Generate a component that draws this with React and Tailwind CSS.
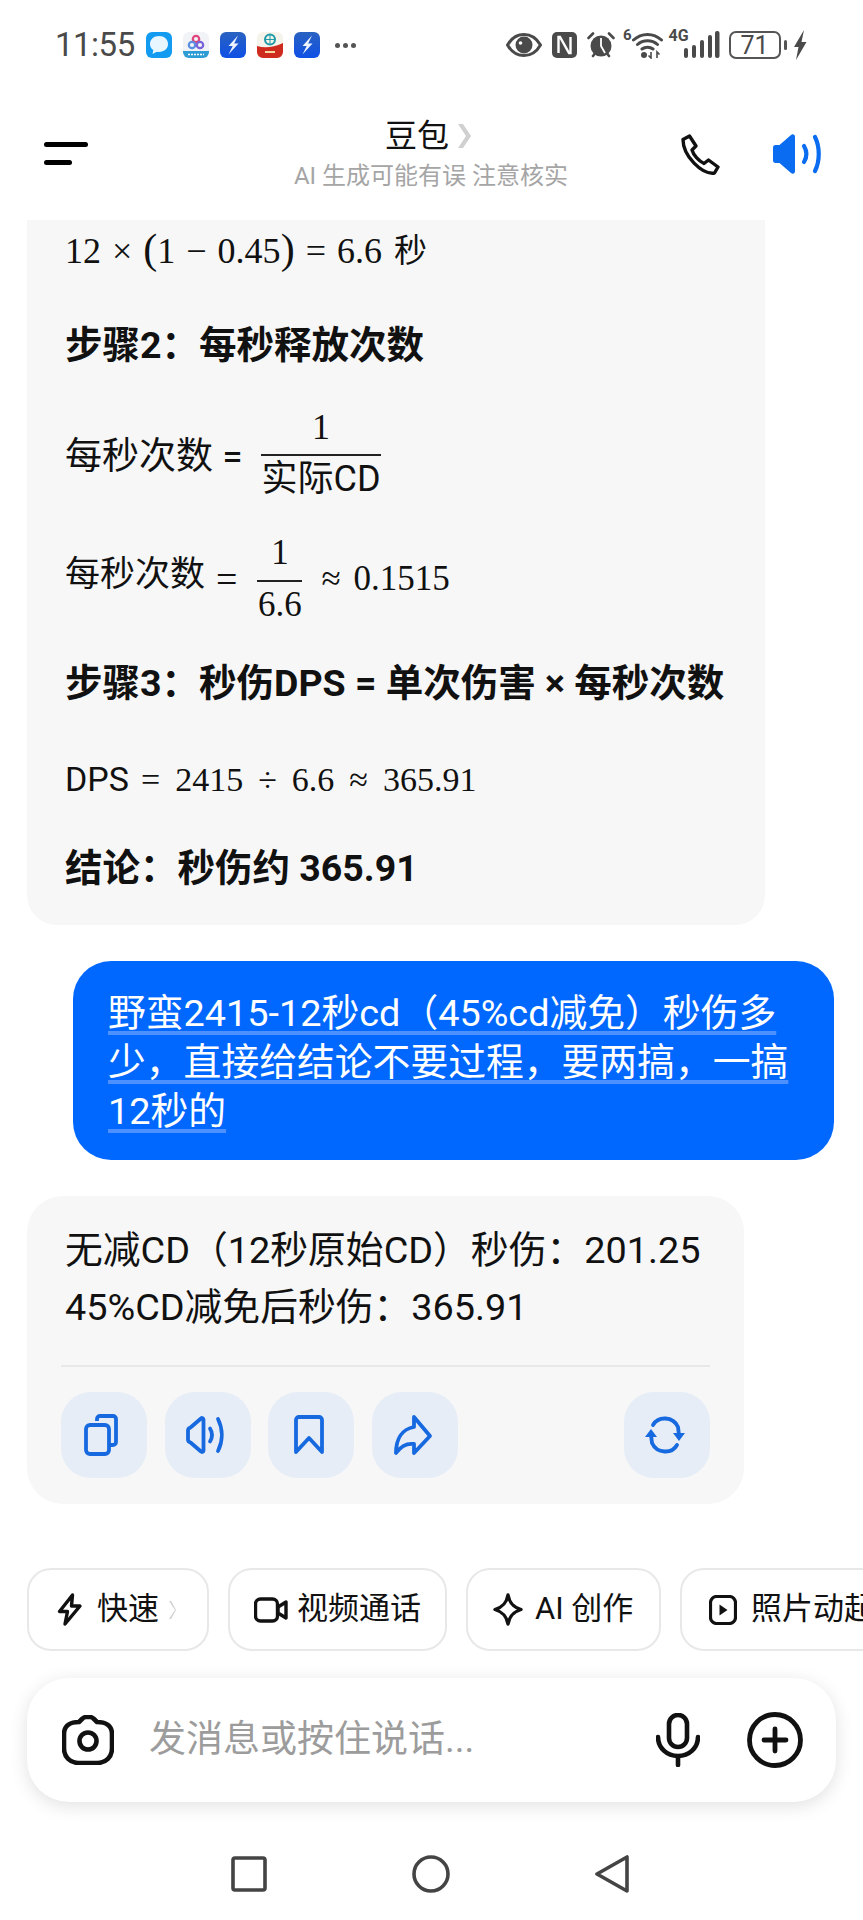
const BLUE = '#1769e0';

// full-width punctuation as it appears in the chat text
const COLON = '\uFF1A';
const LP = '\uFF08';
const RP = '\uFF09';
const COMMA = '\uFF0C';

const AppChat = () => (
  <svg width="26" height="26" viewBox="0 0 26 26">
    <rect width="26" height="26" rx="6" fill="#129bf0" />
    <path d="M13 4c-5.300 0-9 3.500-9 8 0 2.600 1.300 4.700 3.300 6.100L6.500 22l4.300-2.300c.7.200 1.400.2 2.200.2 5.300 0 9-3.400 9-7.900S18.300 4 13 4z" fill="#e8f6ff" />
  </svg>
);

const AppRings = () => (
  <svg width="26" height="26" viewBox="0 0 26 26">
    <rect width="26" height="26" rx="6" fill="#f1f3f6" />
    <circle cx="13" cy="7" r="3.200" fill="none" stroke="#e0457c" strokeWidth="2.200" />
    <circle cx="9" cy="13" r="3.200" fill="none" stroke="#5a8fe0" strokeWidth="2.200" />
    <circle cx="17" cy="13" r="3.200" fill="none" stroke="#7a62d8" strokeWidth="2.200" />
    <path d="M0 19h26v1a6 6 0 0 1-6 6H6a6 6 0 0 1-6-6z" fill="#2f9cd6" />
    <path d="M5 22.500h16" stroke="#fff" strokeWidth="1.400" strokeDasharray="2 1" />
  </svg>
);

const AppBolt = ({ id }) => (
  <svg width="26" height="26" viewBox="0 0 26 26">
    <defs>
      <linearGradient id={id} x1="0" y1="0" x2="0" y2="1">
        <stop offset="0" stopColor="#2a62c0" />
        <stop offset="1" stopColor="#0f50e6" />
      </linearGradient>
    </defs>
    <rect width="26" height="26" rx="6" fill={`url(#${id})`} />
    <path d="M18 3.500L8.500 14h4.200L8.500 22.500 18.500 11.500h-4.300z" fill="#eef4ff" />
  </svg>
);

const AppMobile = () => (
  <svg width="26" height="26" viewBox="0 0 26 26">
    <rect width="26" height="26" rx="6" fill="#f6f3ea" />
    <circle cx="13" cy="7.500" r="5" fill="none" stroke="#1f9aa8" strokeWidth="2" />
    <path d="M8 7.500h10M13 2.500v10" stroke="#1f9aa8" strokeWidth="1" />
    <path d="M0 14c8 2.500 16 1.500 26-3v9a6 6 0 0 1-6 6H6a6 6 0 0 1-6-6z" fill="#cf2a1e" />
    <path d="M8 20h10" stroke="#f7d8a0" strokeWidth="2" />
  </svg>
);

const Eye = () => (
  <svg width="36" height="26" viewBox="0 0 36 26">
    <path d="M1.500 13C5.500 6 11 2.500 18 2.500S30.500 6 34.500 13C30.500 20 25 23.500 18 23.500S5.500 20 1.500 13z" fill="none" stroke="#4a4a4a" strokeWidth="3" />
    <circle cx="18" cy="13" r="8.500" fill="#4a4a4a" />
    <circle cx="14.500" cy="11" r="1.800" fill="#fff" />
  </svg>
);

const Nfc = () => (
  <svg width="25" height="26" viewBox="0 0 25 26">
    <rect x="0" y="0" width="25" height="26" rx="5" fill="#4a4a4a" />
    <path d="M6.500 21V5h1.500l9 16h1.500V5" fill="none" stroke="#fff" strokeWidth="2.400" />
  </svg>
);

const Alarm = () => (
  <svg width="28" height="28" viewBox="0 0 28 28">
    <circle cx="14" cy="15" r="10.500" fill="#4a4a4a" />
    <path d="M14 7v8l4 7" fill="none" stroke="#fff" strokeWidth="1.800" />
    <path d="M1.500 7L6 2.500M26.500 7L22 2.500M6 25l2-2.500M22 25l-2-2.500" stroke="#4a4a4a" strokeWidth="2.600" strokeLinecap="round" />
  </svg>
);

const Wifi = () => (
  <svg width="31" height="28" viewBox="0 0 31 28">
    <path d="M1.500 9C9.500 1.500 21.500 1.500 29.500 9M5.500 13.500c5.500-5 14.500-5 20 0M10 18c3-2.500 8-2.500 11 0" fill="none" stroke="#4a4a4a" strokeWidth="3" strokeLinecap="round" />
    <circle cx="12" cy="24" r="3" fill="#4a4a4a" />
    <path d="M19 21v6l-2.500-2.500M25 27v-6l2.500 2.500" fill="none" stroke="#4a4a4a" strokeWidth="1.600" />
  </svg>
);

const Signal = () => (
  <svg width="37" height="28" viewBox="0 0 37 28">
    <rect x="1" y="17" width="4" height="10" rx="2" fill="#4a4a4a" />
    <rect x="9" y="14" width="4" height="13" rx="2" fill="#4a4a4a" />
    <rect x="17" y="9" width="4" height="18" rx="2" fill="#4a4a4a" />
    <rect x="25" y="4" width="4" height="23" rx="2" fill="#4a4a4a" />
    <rect x="32" y="0" width="4.500" height="27" rx="2" fill="#4a4a4a" />
  </svg>
);

const ChipBolt = () => (
  <svg width="26" height="33" viewBox="0 0 26 33" fill="none" stroke="#111" strokeWidth="3.400" strokeLinejoin="round">
    <path d="M15.500 2L2.500 18.500h8L8 31l15-18h-8.500z" />
  </svg>
);

const ChipVideo = () => (
  <svg width="34" height="26" viewBox="0 0 34 26" fill="none" stroke="#111" strokeWidth="3.400" strokeLinejoin="round">
    <rect x="1.500" y="2" width="22" height="22" rx="5" />
    <path d="M24 10l8-5v16l-8-5z" />
  </svg>
);

const ChipSpark = () => (
  <svg width="30" height="33" viewBox="0 0 30 33" fill="none" stroke="#111" strokeWidth="3.400" strokeLinejoin="round">
    <path d="M15 2c1.500 8 5 12 13 14.500-8 2.500-11.500 6.500-13 14.500-1.500-8-5-12-13-14.500C10 14 13.500 10 15 2z" />
  </svg>
);

const ChipPlay = () => (
  <svg width="28" height="30" viewBox="0 0 28 30">
    <rect x="1.500" y="1.500" width="25" height="27" rx="6" fill="none" stroke="#111" strokeWidth="3.200" />
    <path d="M10.500 9.500l8 5.500-8 5.500z" fill="#111" />
  </svg>
);

const ActionCopy = () => (
  <svg width="44" height="44" viewBox="0 0 44 44" fill="none" stroke={BLUE} strokeWidth="3.800" strokeLinejoin="round">
    <path d="M15 8V6a3 3 0 0 1 3-3h13a3 3 0 0 1 3 3v23a3 3 0 0 1-3 3h-3" />
    <rect x="4" y="12" width="23" height="29" rx="4" />
  </svg>
);

const ActionVolume = () => (
  <svg width="44" height="44" viewBox="0 0 44 44" fill="none" stroke={BLUE} strokeWidth="3.800" strokeLinecap="round" strokeLinejoin="round">
    <path d="M2 17.500c0-1.500 1-2.500 2.500-3L15 5.500c1-1 2.500-.3 2.500 1v31c0 1.300-1.500 2-2.500 1L4.500 29.500c-1.500-.5-2.500-1.500-2.500-3z" />
    <path d="M24 15.500c2.500 4 2.500 9 0 13M32 6c5 10 5 22 0 32" />
  </svg>
);

const ActionBookmark = () => (
  <svg width="44" height="44" viewBox="0 0 44 44" fill="none" stroke={BLUE} strokeWidth="3.800" strokeLinejoin="round">
    <path d="M7 7a3 3 0 0 1 3-3h20a3 3 0 0 1 3 3v32L20 25 7 39z" />
  </svg>
);

const ActionShare = () => (
  <svg width="44" height="44" viewBox="0 0 44 44" fill="none" stroke={BLUE} strokeWidth="3.800" strokeLinejoin="round">
    <path d="M21 4l16 19-16 17V31C13 30 8 33 3 40c0-14 6-24 18-26z" />
  </svg>
);

const ActionRefresh = () => (
  <svg width="44" height="44" viewBox="0 0 44 44" fill="none" stroke={BLUE} strokeWidth="3.800" strokeLinecap="round">
    <path d="M8 12C13 3 28 3 33 14l1 8" />
    <path d="M32 32c-5 9-20 9-25-2l-1-8" />
    <path d="M28 20h12l-6 8zM0 24h12l-6-8z" fill={BLUE} stroke="none" />
  </svg>
);

const Fraction = ({ top, bottom, className, topClass }) => (
  <span className={`inline-flex flex-col items-center ${className}`}>
    <span className={`${topClass} leading-[44px] pb-[5px]`}>{top}</span>
    <span className="block w-full h-[2px] bg-[#222]" />
    <span className="leading-[46px]">{bottom}</span>
  </span>
);

const serif = "font-['Liberation_Serif',serif]";
const Chip = ({ children, className }) => (
  <div className={`h-[83px] shrink-0 flex items-center rounded-[24px] border-2 border-[#e8e8e8] bg-white text-[31px] text-[#111] ${className}`}>
    {children}
  </div>
);

const ActionButton = ({ children, className = '' }) => (
  <div className={`w-[86px] h-[86px] rounded-[30px] bg-[#e6edf7] flex items-center justify-center ${className}`}>{children}</div>
);

export default function App() {
  return (
    <div className="w-[863px] h-[1920px] overflow-hidden bg-white text-[#111] font-['Roboto','Noto_Sans_CJK_SC',sans-serif]">
      {/* status bar */}
      <div className="h-[90px] flex items-center pl-[55px]">
        <span className="w-[82px] text-[33px] tracking-[-0.5px] text-[#4a4a4a]">11:55</span>
        <div className="ml-[9px] flex items-center gap-[11px]">
          <AppChat />
          <AppRings />
          <AppBolt id="boltA" />
          <AppMobile />
          <AppBolt id="boltB" />
        </div>
        <div className="ml-[15px] flex gap-[3px]">
          <span className="w-[5px] h-[5px] rounded-full bg-[#555]" />
          <span className="w-[5px] h-[5px] rounded-full bg-[#555]" />
          <span className="w-[5px] h-[5px] rounded-full bg-[#555]" />
        </div>
        <div className="ml-[150px] flex items-center">
          <Eye />
          <div className="ml-[10px]"><Nfc /></div>
          <div className="ml-[10px]"><Alarm /></div>
          <span className="ml-[8px] self-start mt-[-6px] text-[15px] font-bold text-[#4a4a4a]">6</span>
          <Wifi />
          <div className="ml-[6px] relative w-[51px] h-[28px] flex justify-end">
            <span className="absolute left-0 top-[-3px] text-[16px] font-bold text-[#4a4a4a] leading-[16px]">4G</span>
            <Signal />
          </div>
          <div className="ml-[9px] w-[52px] h-[28px] rounded-[7px] border-2 border-[#555] flex items-center justify-center text-[25px] leading-none text-[#4a4a4a]">71</div>
          <span className="ml-[3px] w-[3px] h-[10px] rounded-[2px] bg-[#555]" />
          <svg className="ml-[6px]" width="14" height="30" viewBox="0 0 14 30">
            <path d="M11 0L1 17h4.500L3 30 13.500 12H8.500z" fill="#4a4a4a" />
          </svg>
        </div>
      </div>

      {/* header */}
      <div className="h-[130px] flex items-start relative">
        <div className="ml-[44px] mt-[52px] flex flex-col gap-[13px]">
          <span className="block w-[44px] h-[5px] rounded-full bg-black" />
          <span className="block w-[28px] h-[5px] rounded-full bg-black" />
        </div>
        <div className="absolute left-[284px] top-[24px] w-[294px] flex flex-col items-center">
          <div className="flex items-center h-[44px] pr-[6px]">
            <span className="text-[32px] leading-[44px] text-[#111]">豆包</span>
            <svg className="ml-[9px]" width="13" height="26" viewBox="0 0 13 26">
              <path d="M0 1l8 12L0 25h5l8-12L5 1z" fill="#d0d0d0" />
            </svg>
          </div>
          <span className="text-[24px] leading-[30px] mt-[3px] text-[#a5a5a5] whitespace-nowrap">AI 生成可能有误 注意核实</span>
        </div>
        <div className="ml-auto mt-[43px] mr-[41px] flex items-center">
          <svg width="41" height="41" viewBox="0 0 41 41" fill="none" stroke="#111" strokeWidth="3.400" strokeLinejoin="round">
            <path d="M3 5.500L9.500 2l6.500 10-4 4c1.500 5 6.500 11 12 13.500l4.500-3.500 9.500 7-3.500 6C22 41 3 22 3 5.500z" />
          </svg>
          <svg className="ml-[51px]" width="50" height="42" viewBox="0 0 50 42">
            <path d="M1 14.500c0-1.500 1-2.500 2.500-2.500h4L19 2c2-1.500 4-.5 4 2v34c0 2.500-2 3.500-4 2L7.500 30h-4C2 30 1 29 1 27.500z" fill="#0a6cf0" />
            <path d="M32 13c3 5 3 11 0 16M43 4c5 10 5 24 0 34" fill="none" stroke="#0a6cf0" strokeWidth="4.200" strokeLinecap="round" />
          </svg>
        </div>
      </div>

      {/* previous answer */}
      <div className="ml-[27px] w-[738px] h-[705px] rounded-b-[30px] bg-[#f7f7f7] pl-[38px] text-[37.500px]">
        <div className={`h-[62px] flex items-center text-[36px] ${serif}`}>
          <span className="whitespace-pre [word-spacing:2px]">12 × <span className="text-[42px] leading-none">(</span>1 − 0.45<span className="text-[42px] leading-none">)</span> = 6.6</span>
          <span className="ml-[12px] text-[33px] font-['Roboto','Noto_Sans_CJK_SC',sans-serif]">秒</span>
        </div>
        <div className="mt-[38px] h-[50px] flex items-center font-bold">{`步骤2${COLON}每秒释放次数`}</div>
        <div className="mt-[33px] h-[100px] flex items-center">
          <span className="mt-[7px] text-[37px]">每秒次数 =</span>
          <Fraction className="ml-[19px] text-[36px]" topClass={serif} top="1" bottom="实际CD" />
        </div>
        <div className="mt-[26px] h-[100px] flex items-center text-[35px]">
          <span className="mb-[7px]">每秒次数</span>
          <span className={`ml-[11px] text-[38px] ${serif}`}>=</span>
          <Fraction className={`ml-[20px] w-[45px] text-[35px] ${serif}`} topClass="" top="1" bottom="6.6" />
          <span className={`ml-[19px] whitespace-pre [word-spacing:4px] ${serif}`}>≈ 0.1515</span>
        </div>
        <div className="mt-[29px] h-[50px] flex items-center font-bold whitespace-nowrap">{`步骤3${COLON}秒伤DPS = 单次伤害 × 每秒次数`}</div>
        <div className="mt-[46px] h-[50px] flex items-center text-[34px]">
          <span>DPS</span>
          <span className={`ml-[12px] whitespace-pre [word-spacing:6.500px] ${serif}`}>= 2415 ÷ 6.6 ≈ 365.91</span>
        </div>
        <div className="mt-[39px] h-[50px] flex items-center font-bold">{`结论${COLON}秒伤约 365.91`}</div>
      </div>

      {/* user bubble */}
      <div className="mt-[36px] ml-[73px] w-[761px] h-[199px] rounded-[38px] bg-[#0068ff] pl-[35px] pr-[38px] pt-[28px] text-white text-[37.800px] leading-[49px]">
        <span className="underline decoration-[#4d90ff] decoration-[4px] underline-offset-[5px] [text-decoration-skip-ink:none]">
          {`野蛮2415-12秒cd${LP}45%cd减免${RP}秒伤多少${COMMA}直接给结论不要过程${COMMA}要两搞${COMMA}一搞12秒的`}
        </span>
      </div>

      {/* latest answer */}
      <div className="mt-[36px] ml-[27px] w-[717px] h-[308px] rounded-[36px] bg-[#f7f7f7] px-[34px] pt-[26px]">
        <div className="pl-[4px] text-[37.800px] leading-[57px] whitespace-nowrap">
          <div>{`无减CD${LP}12秒原始CD${RP}秒伤${COLON}201.25`}</div>
          <div>{`45%CD减免后秒伤${COLON}365.91`}</div>
        </div>
        <div className="mt-[29px] h-[2px] bg-[#e8e8e8]" />
        <div className="mt-[25px] flex gap-[17.500px]">
          <ActionButton><ActionCopy /></ActionButton>
          <ActionButton><ActionVolume /></ActionButton>
          <ActionButton><ActionBookmark /></ActionButton>
          <ActionButton><ActionShare /></ActionButton>
          <ActionButton className="ml-auto"><ActionRefresh /></ActionButton>
        </div>
      </div>

      {/* quick chips */}
      <div className="mt-[64px] ml-[27px] flex gap-[19px] overflow-hidden whitespace-nowrap">
        <Chip className="w-[182px] pl-[28px]">
          <ChipBolt />
          <span className="ml-[14px]">快速</span>
          <svg className="ml-[9px]" width="9" height="20" viewBox="0 0 9 20">
            <path d="M1 1l6 9-6 9h2l5-9-5-9z" fill="#cfcfcf" />
          </svg>
        </Chip>
        <Chip className="w-[219px] pl-[24px]">
          <ChipVideo />
          <span className="ml-[9px]">视频通话</span>
        </Chip>
        <Chip className="w-[195px] pl-[25px]">
          <ChipSpark />
          <span className="ml-[12px]">AI 创作</span>
        </Chip>
        <Chip className="w-[240px] pl-[27px]">
          <ChipPlay />
          <span className="ml-[14px]">照片动起来</span>
        </Chip>
      </div>

      {/* input box */}
      <div className="mt-[27px] ml-[27px] w-[809px] h-[124px] rounded-[42px] bg-white shadow-[0_4px_18px_rgba(0,0,0,0.12)] flex items-center pl-[35px]">
        <svg width="52" height="50" viewBox="0 0 52 50" fill="none" stroke="#111" strokeWidth="4.600" strokeLinejoin="round">
          <path d="M17 7l3-3c1-1 2-2 4-2h4c2 0 3 1 4 2l3 3c8 0 15 3 15 12v14c0 9-6 15-15 15H17C8 48 2 42 2 33V19C2 10 9 7 17 7z" />
          <circle cx="26" cy="26" r="8.500" />
        </svg>
        <span className="ml-[35px] text-[37px] text-[#9c9c9c]">发消息或按住说话...</span>
        <svg className="ml-auto" width="44" height="54" viewBox="0 0 44 54" fill="none" stroke="#111" strokeWidth="4.600" strokeLinecap="round">
          <rect x="13" y="2" width="18" height="32" rx="9" />
          <path d="M2 24c0 11 9 19 20 19s20-8 20-19M22 43v9" />
        </svg>
        <svg className="ml-[47px] mr-[33px]" width="56" height="56" viewBox="0 0 56 56" fill="none" stroke="#111" strokeWidth="4.800" strokeLinecap="round">
          <circle cx="28" cy="28" r="25.500" />
          <path d="M28 17v22M17 28h22" />
        </svg>
      </div>

      {/* nav bar */}
      <div className="mt-[53px] flex justify-center items-center gap-[144px] pr-[2px]">
        <svg width="38" height="38" viewBox="0 0 38 38" fill="none" stroke="#444" strokeWidth="3.600" strokeLinejoin="round">
          <rect x="3" y="3" width="32" height="32" rx="2" />
        </svg>
        <svg width="38" height="38" viewBox="0 0 38 38" fill="none" stroke="#444" strokeWidth="3.600">
          <circle cx="19" cy="19" r="17" />
        </svg>
        <svg width="38" height="38" viewBox="0 0 38 38" fill="none" stroke="#444" strokeWidth="3.600" strokeLinejoin="round">
          <path d="M33 2v34L3 19z" />
        </svg>
      </div>
    </div>
  );
}
